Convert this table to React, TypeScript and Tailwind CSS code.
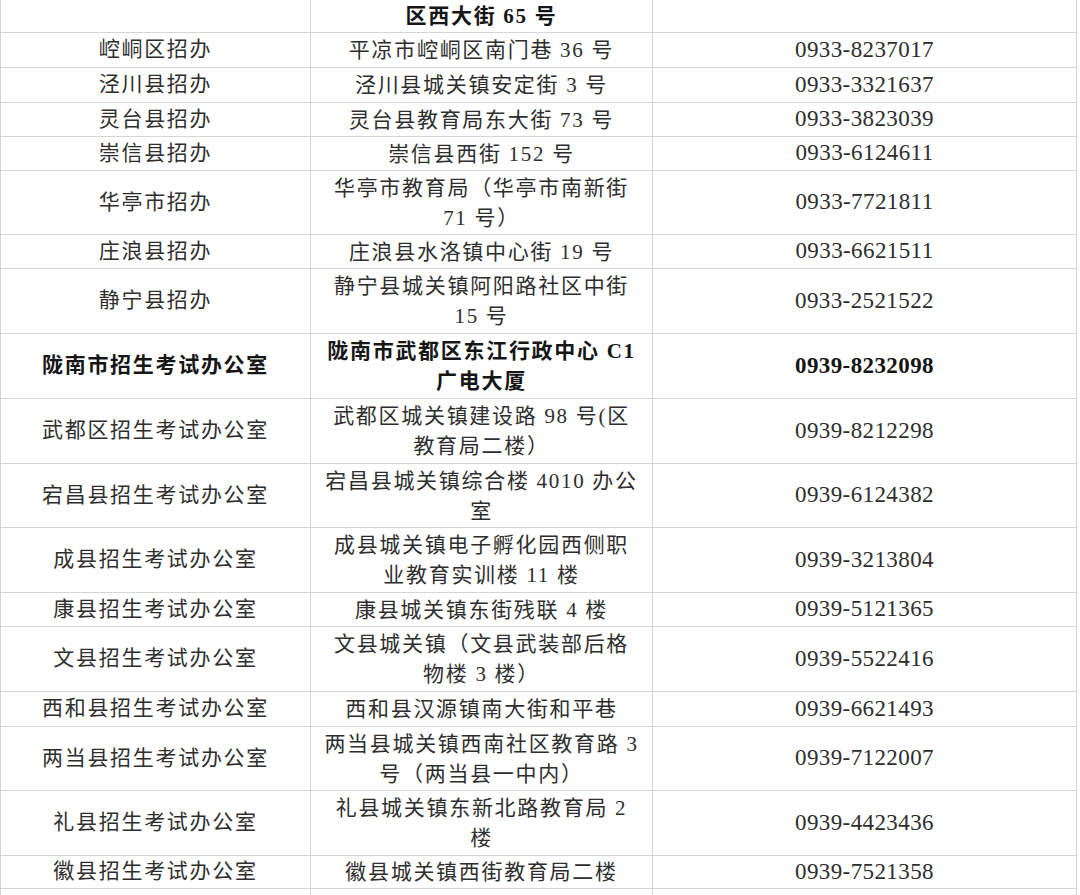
import React from 'react';

type Row = {
  h: string;
  name: string;
  addr: string[];
  phone: string;
  bold?: boolean;
};

const rows: Row[] = [
  { h: 'h-[33px]', name: '', addr: ['区西大街 65 号'], phone: '', bold: true },
  { h: 'h-[35px]', name: '崆峒区招办', addr: ['平凉市崆峒区南门巷 36 号'], phone: '0933-8237017' },
  { h: 'h-[35px]', name: '泾川县招办', addr: ['泾川县城关镇安定街 3 号'], phone: '0933-3321637' },
  { h: 'h-[34px]', name: '灵台县招办', addr: ['灵台县教育局东大街 73 号'], phone: '0933-3823039' },
  { h: 'h-[34px]', name: '崇信县招办', addr: ['崇信县西街 152 号'], phone: '0933-6124611' },
  { h: 'h-[64px]', name: '华亭市招办', addr: ['华亭市教育局（华亭市南新街', '71 号）'], phone: '0933-7721811' },
  { h: 'h-[34px]', name: '庄浪县招办', addr: ['庄浪县水洛镇中心街 19 号'], phone: '0933-6621511' },
  { h: 'h-[65px]', name: '静宁县招办', addr: ['静宁县城关镇阿阳路社区中街', '15 号'], phone: '0933-2521522' },
  { h: 'h-[65px]', name: '陇南市招生考试办公室', addr: ['陇南市武都区东江行政中心 C1', '广电大厦'], phone: '0939-8232098', bold: true },
  { h: 'h-[65px]', name: '武都区招生考试办公室', addr: ['武都区城关镇建设路 98 号(区', '教育局二楼）'], phone: '0939-8212298' },
  { h: 'h-[64px]', name: '宕昌县招生考试办公室', addr: ['宕昌县城关镇综合楼 4010 办公', '室'], phone: '0939-6124382' },
  { h: 'h-[65px]', name: '成县招生考试办公室', addr: ['成县城关镇电子孵化园西侧职', '业教育实训楼 11 楼'], phone: '0939-3213804' },
  { h: 'h-[34px]', name: '康县招生考试办公室', addr: ['康县城关镇东街残联 4 楼'], phone: '0939-5121365' },
  { h: 'h-[65px]', name: '文县招生考试办公室', addr: ['文县城关镇（文县武装部后格', '物楼 3 楼）'], phone: '0939-5522416' },
  { h: 'h-[35px]', name: '西和县招生考试办公室', addr: ['西和县汉源镇南大街和平巷'], phone: '0939-6621493' },
  { h: 'h-[64px]', name: '两当县招生考试办公室', addr: ['两当县城关镇西南社区教育路 3', '号（两当县一中内）'], phone: '0939-7122007' },
  { h: 'h-[65px]', name: '礼县招生考试办公室', addr: ['礼县城关镇东新北路教育局 2', '楼'], phone: '0939-4423436' },
  { h: 'h-[33px]', name: '徽县招生考试办公室', addr: ['徽县城关镇西街教育局二楼'], phone: '0939-7521358' },
  { h: 'h-[40px]', name: '', addr: [], phone: '' },
];

function TableRow({ row }: { row: Row }) {
  const tone = row.bold ? 'font-bold text-[#161616]' : 'text-[#2e2e2e]';
  return (
    <div className={`flex border-b border-[#d6d6d6] ${row.h}`}>
      {/* Office */}
      <div className={`w-[310px] shrink-0 border-r border-[#d6d6d6] flex items-center justify-center text-[21px] tracking-[1.7px] whitespace-nowrap ${tone}`}>
        {row.name}
      </div>
      {/* Address */}
      <div className={`w-[342px] shrink-0 border-r border-[#d6d6d6] flex flex-col items-center justify-center text-[21px] leading-[30px] tracking-[1.7px] whitespace-nowrap ${tone}`}>
        {row.addr.map((line, i) => (
          <span key={i}>{line}</span>
        ))}
      </div>
      {/* Phone */}
      <div className={`flex-1 flex items-center justify-center text-[23px] tracking-[0.4px] ${tone}`}>
        {row.phone}
      </div>
    </div>
  );
}

export default function App() {
  return (
    <div className="w-[1080px] h-[895px] overflow-hidden bg-white font-['Liberation_Serif','Noto_Sans_CJK_SC',serif]">
      <div className="w-[1077px] border-l border-r border-[#d6d6d6]">
        {rows.map((row, i) => (
          <TableRow key={i} row={row} />
        ))}
      </div>
    </div>
  );
}
